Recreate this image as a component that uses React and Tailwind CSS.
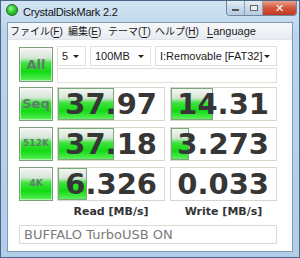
import React from 'react';

const green =
  'bg-[linear-gradient(to_bottom,#f4f5f4_0%,#d6e6d6_30%,#3ee23e_46%,#12da12_72%,#5cef5c_100%)]';

function Btn({ label, small }) {
  return (
    <div
      className={`w-[34px] h-full border border-[#7c9e7c] ${green} flex items-center justify-center shadow-[inset_0_0_0_1px_rgba(255,255,255,0.5)]`}
    >
      <span
        className={`${small ? 'text-[9px]' : 'text-[13px]'} text-[#5d7d6a] font-bold`}
        style={{ fontFamily: 'Verdana, "DejaVu Sans", sans-serif' }}
      >
        {label}
      </span>
    </div>
  );
}

function Value({ value, pct, w }) {
  return (
    <div className={`relative ${w} h-full border border-[#d6d6cc] bg-white flex items-center justify-end pr-[7px]`}>
      {pct > 0 && (
        <div
          className={`absolute left-0 top-0 bottom-0 border border-[#79a879] ${green}`}
          style={{ width: `${pct}%` }}
        />
      )}
      <span
        className="relative text-[29px] font-bold text-[#363636] leading-none"
        style={{ fontFamily: '"DejaVu Sans", Verdana, sans-serif' }}
      >
        {value}
      </span>
    </div>
  );
}

function Combo({ w, text }) {
  return (
    <div className={`${w} h-[20px] border border-[#e0e0da] bg-white flex items-center justify-between pl-[4px] pr-[6px]`}>
      <span className="text-[11px] text-[#1a1a1a]">{text}</span>
      <span className="w-0 h-0 border-l-[3px] border-r-[3px] border-t-[3px] border-l-transparent border-r-transparent border-t-[#222]" />
    </div>
  );
}

function MenuItem({ pre, acc, w }) {
  return (
    <span className={`whitespace-nowrap ${w}`}>
      {pre}(<span className="underline underline-offset-2">{acc}</span>)
    </span>
  );
}

export default function App() {
  const rows = [
    { label: 'Seq', read: '37.97', rp: 53, write: '14.31', wp: 40, small: false },
    { label: '512K', read: '37.18', rp: 53, write: '3.273', wp: 17, small: true },
    { label: '4K', read: '6.326', rp: 27, write: '0.033', wp: 0, small: true },
  ];

  return (
    <div
      className="w-[300px] h-[258px] flex flex-col border border-[#4a6885] bg-[linear-gradient(to_bottom,#d3e4f3_0%,#bcd5ec_12%,#b2cde8_100%)] overflow-hidden"
      style={{ fontFamily: '"Liberation Sans", Arial, "Noto Sans CJK JP", sans-serif' }}
    >
      {/* Title bar */}
      <div className="h-[21px] flex items-start shrink-0">
        <div className="mt-[3px] ml-[5px] w-[12px] h-[12px] rounded-full border border-[#1f6a1f] bg-[radial-gradient(circle_at_40%_35%,#9cf59c_0%,#2fcc2f_45%,#138a13_100%)]" />
        <span className="ml-[5px] mt-[3px] text-[11px] text-[#111] tracking-[-0.2px]">CrystalDiskMark 2.2</span>
        <div className="ml-auto mr-[2px] flex h-[15px] rounded-b-[4px] border border-t-0 border-[#6d86a0] overflow-hidden">
          <div className="w-[18px] h-full bg-[linear-gradient(to_bottom,#e6eef6,#c8d8e8_50%,#b7cbe0)] flex items-center justify-center border-r border-[#8aa0b6]">
            <div className="w-[7px] h-[2px] mt-[4px] bg-white border border-[#555]" />
          </div>
          <div className="w-[18px] h-full bg-[linear-gradient(to_bottom,#e6eef6,#c8d8e8_50%,#b7cbe0)] flex items-center justify-center border-r border-[#8aa0b6]">
            <div className="w-[8px] h-[6px] border border-[#666] bg-[#e8eef4]" />
          </div>
          <div className="w-[33px] h-full bg-[linear-gradient(to_bottom,#e8a08e,#d2563c_50%,#c23a20)] flex items-center justify-center">
            <span className="text-white text-[11px] font-bold leading-none" style={{ fontFamily: '"DejaVu Sans", sans-serif' }}>✕</span>
          </div>
        </div>
      </div>

      {/* Client */}
      <div className="flex-1 mx-[6px] mb-[5px] border border-[#7e9bb8] bg-white flex flex-col">
        {/* Menu */}
        <div
          className="h-[17px] shrink-0 bg-[linear-gradient(to_bottom,#f6f7f9,#e8ecf1)] border-b border-[#dfe4ea] flex items-center pl-[2px] text-[10px] text-[#1a1a1a]"
          style={{ fontFamily: '"Liberation Sans", "Noto Sans CJK JP", sans-serif' }}
        >
          <MenuItem pre="ファイル" acc="F" w="w-[58px]" />
          <MenuItem pre="編集" acc="E" w="w-[40px]" />
          <MenuItem pre="テーマ" acc="T" w="w-[47px]" />
          <MenuItem pre="ヘルプ" acc="H" w="w-[52px]" />
          <span className="text-[11px]"><span className="underline underline-offset-2">L</span>anguage</span>
        </div>

        {/* Body */}
        <div className="flex-1 pl-[11px] pt-[6px] flex flex-col">
          <div className="flex gap-[4px] h-[37px]">
            <div className="h-[35px] mt-[1px]"><Btn label="All" /></div>
            <div className="flex flex-col gap-[2px]">
              <div className="flex gap-[4px]">
                <Combo w="w-[29px]" text="5" />
                <Combo w="w-[61px]" text="100MB" />
                <Combo w="w-[122px]" text="I:Removable [FAT32]" />
              </div>
              <div className="w-[220px] h-[15px] border border-[#e0e0da] bg-white" />
            </div>
          </div>

          <div className="flex flex-col gap-[6px] mt-[4px]">
            {rows.map((r) => (
              <div key={r.label} className="flex h-[34px]">
                <Btn label={r.label} small={r.small} />
                <div className="ml-[4px] h-full"><Value value={r.read} pct={r.rp} w="w-[108px]" /></div>
                <div className="ml-[5px] h-full"><Value value={r.write} pct={r.wp} w="w-[107px]" /></div>
              </div>
            ))}
          </div>

          <div className="flex h-[16px] mt-[3px] text-[11px] font-bold text-[#333]" style={{ fontFamily: '"DejaVu Sans", Verdana, sans-serif' }}>
            <div className="w-[34px]" />
            <div className="ml-[4px] w-[108px] text-center">Read [MB/s]</div>
            <div className="ml-[5px] w-[107px] text-center">Write [MB/s]</div>
          </div>

          <div className="mt-[5px] w-[258px] h-[19px] border border-[#dcdcd4] bg-white flex items-center pl-[4px]">
            <span className="text-[13px] text-[#7a7a7a]" style={{ fontFamily: '"DejaVu Sans", Verdana, sans-serif' }}>BUFFALO TurboUSB ON</span>
          </div>
        </div>
      </div>
    </div>
  );
}
